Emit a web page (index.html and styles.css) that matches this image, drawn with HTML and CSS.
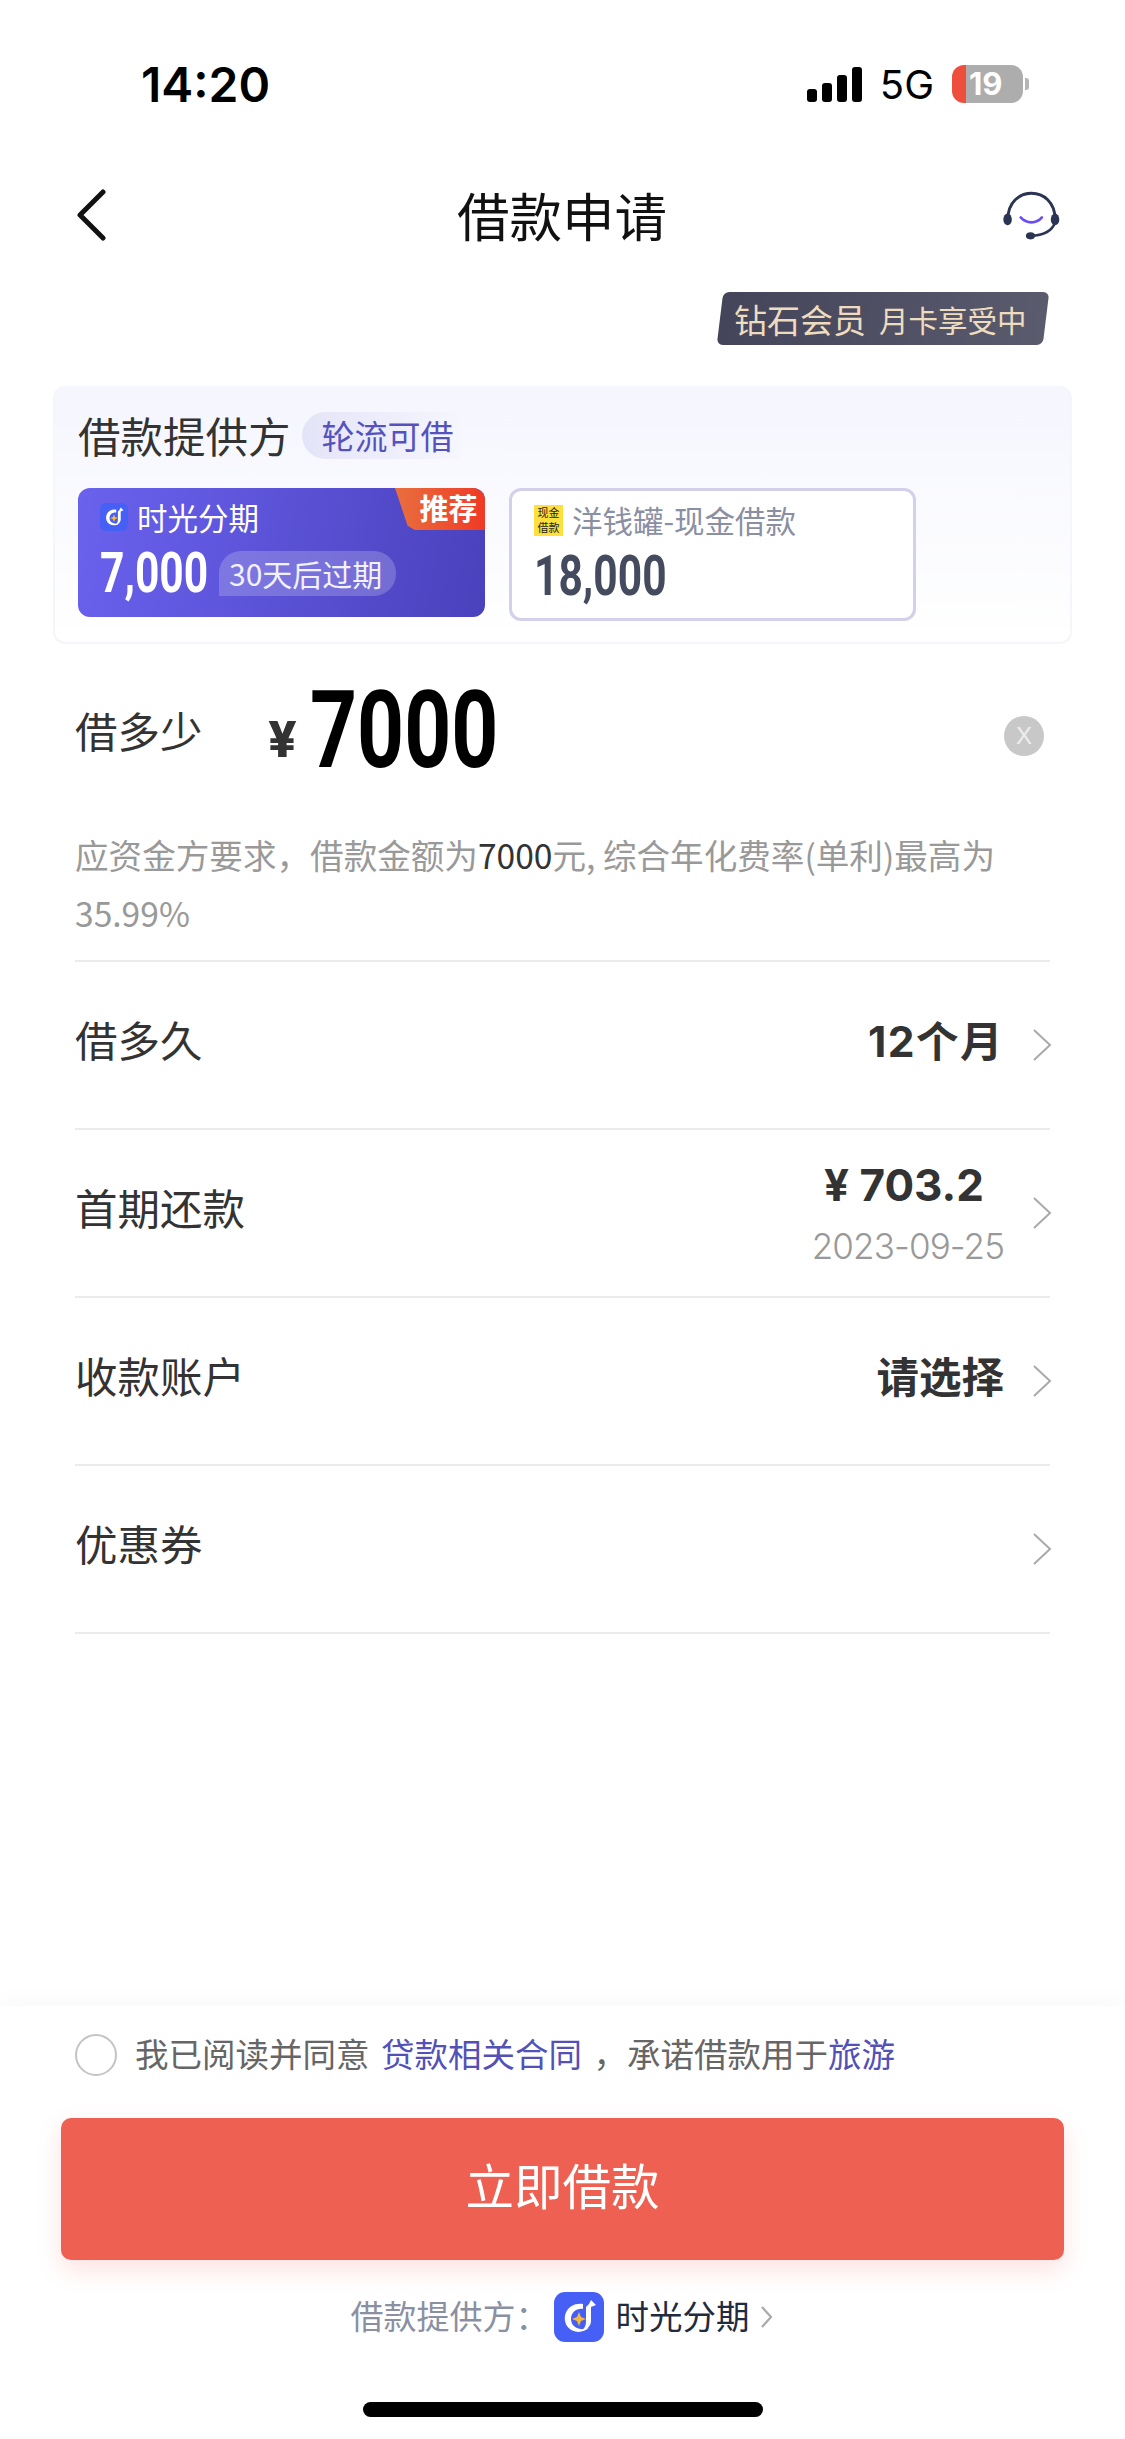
FILE: index.html
```html
<!DOCTYPE html>
<html lang="zh-CN">
<head>
    <meta charset="UTF-8">
    <meta name="viewport" content="width=device-width, initial-scale=1.0">
    <title>借款申请</title>
    <link rel="stylesheet" href="styles.css">
</head>
<body>
    <div class="page">
        <div class="status-bar">
            <span class="status-time">14:20</span>
            <div class="status-right">
                <div class="signal">
                    <i class="bar-1"></i><i class="bar-2"></i><i class="bar-3"></i><i class="bar-4"></i>
                </div>
                <span class="network">5G</span>
                <div class="battery"><span class="battery-level">19</span></div>
                <i class="battery-nub"></i>
            </div>
        </div>

        <div class="nav">
            <svg class="nav-back" width="32" height="52" viewBox="0 0 32 52">
                <polyline points="28,3 5,26 28,49" fill="none" stroke="#111" stroke-width="5" stroke-linecap="round" stroke-linejoin="round"/>
            </svg>
            <h1 class="nav-title">借款申请</h1>
            <svg class="nav-service" width="59" height="54" viewBox="660 450 180 165">
                <path d="M681 545 C681 440 825 440 825 545" fill="none" stroke="#2b3553" stroke-width="9"/>
                <path d="M825 555 C815 585 785 595 750 596" fill="none" stroke="#2b3553" stroke-width="8"/>
                <ellipse cx="680" cy="546" rx="13" ry="18" fill="#2b3553"/>
                <ellipse cx="825" cy="546" rx="13" ry="18" fill="#2b3553"/>
                <ellipse cx="750" cy="596" rx="14" ry="11" fill="#2b3553"/>
                <path d="M720 540 C738 560 768 560 785 540" fill="none" stroke="#6a4df5" stroke-width="8" stroke-linecap="round"/>
            </svg>
        </div>

        <div class="vip-row">
            <div class="vip-badge">
                <span class="vip-level">钻石会员</span>
                <span class="vip-term">月卡享受中</span>
            </div>
        </div>

        <div class="provider-card">
            <div class="provider-head">
                <span class="provider-title">借款提供方</span>
                <span class="provider-pill">轮流可借</span>
            </div>
            <div class="provider-list">
                <div class="provider-item provider-active">
                    <span class="provider-corner">推荐</span>
                    <div class="provider-name">
                        <svg class="logo" width="28" height="28" viewBox="0 0 50 50">
                            <rect width="50" height="50" rx="11" fill="#4660f5"/>
                            <path d="M29 12 C14 10 7 24 13 34 C19 42 29 41 35 36 C27 39 17 36 17 27 C17 20 23 16 29 17 Z" fill="#fff"/>
                            <path d="M32 15 L32 30 C32 34 30 37 27 39 C33 38 37 34 37 29 L37 15 L42 13 L37 8 L35 12 Z" fill="#fff"/>
                            <path d="M25 20 L27 25 L32 27 L27 29 L25 34 L23 29 L18 27 L23 25 Z" fill="#f6b93b"/>
                        </svg>
                        <span>时光分期</span>
                    </div>
                    <div class="provider-amount">
                        <span class="amount-box"><span class="amount-num">7,000</span></span>
                        <span class="amount-tag">30天后过期</span>
                    </div>
                </div>
                <div class="provider-item provider-normal">
                    <div class="provider-name">
                        <span class="logo-yellow"><b>现金</b><b>借款</b></span>
                        <span>洋钱罐-现金借款</span>
                    </div>
                    <div class="provider-amount">
                        <span class="amount-box amount-box-wide"><span class="amount-num">18,000</span></span>
                    </div>
                </div>
            </div>
        </div>

        <div class="amount-row">
            <span class="row-label amount-label">借多少</span>
            <span class="amount-yen">¥</span>
            <span class="amount-big-box"><span class="amount-big">7000</span></span>
            <span class="amount-clear">X</span>
        </div>

        <div class="amount-tip">
            <div class="tip-line">应资金方要求，借款金额为<span class="tip-dark">7000</span>元, 综合年化费率(单利)最高为</div>
            <div class="tip-line">35.99%</div>
        </div>

        <div class="form-row">
            <span class="row-label">借多久</span>
            <div class="row-value"><span class="value-strong value-term">12个月</span></div>
            <svg class="chevron" width="20" height="34" viewBox="0 0 20 34"><polyline points="2,2 18,17 2,32" fill="none" stroke="#aaa" stroke-width="2"/></svg>
        </div>
        <div class="form-row">
            <span class="row-label">首期还款</span>
            <div class="row-value">
                <span class="value-strong value-money">¥ 703.2</span>
                <span class="value-date">2023-09-25</span>
            </div>
            <svg class="chevron" width="20" height="34" viewBox="0 0 20 34"><polyline points="2,2 18,17 2,32" fill="none" stroke="#aaa" stroke-width="2"/></svg>
        </div>
        <div class="form-row">
            <span class="row-label">收款账户</span>
            <div class="row-value"><span class="value-strong">请选择</span></div>
            <svg class="chevron" width="20" height="34" viewBox="0 0 20 34"><polyline points="2,2 18,17 2,32" fill="none" stroke="#aaa" stroke-width="2"/></svg>
        </div>
        <div class="form-row">
            <span class="row-label">优惠券</span>
            <div class="row-value"></div>
            <svg class="chevron" width="20" height="34" viewBox="0 0 20 34"><polyline points="2,2 18,17 2,32" fill="none" stroke="#aaa" stroke-width="2"/></svg>
        </div>

        <div class="bottom-panel">
            <div class="agree-row">
                <i class="agree-check"></i>
                <span class="agree-text">我已阅读并同意 <a class="agree-link">贷款相关合同</a> ，承诺借款用于<a class="agree-link">旅游</a></span>
            </div>
            <button class="submit-btn">立即借款</button>
            <div class="bottom-provider">
                <span class="bottom-label">借款提供方：</span>
                <svg class="logo-big" width="50" height="50" viewBox="0 0 50 50">
                    <rect width="50" height="50" rx="11" fill="#4660f5"/>
                    <path d="M29 12 C14 10 7 24 13 34 C19 42 29 41 35 36 C27 39 17 36 17 27 C17 20 23 16 29 17 Z" fill="#fff"/>
                    <path d="M32 15 L32 30 C32 34 30 37 27 39 C33 38 37 34 37 29 L37 15 L42 13 L37 8 L35 12 Z" fill="#fff"/>
                    <path d="M25 20 L27 25 L32 27 L27 29 L25 34 L23 29 L18 27 L23 25 Z" fill="#f6b93b"/>
                </svg>
                <span class="bottom-name">时光分期</span>
                <svg width="13" height="24" viewBox="0 0 13 24"><polyline points="2,2 11,12 2,22" fill="none" stroke="#aaa" stroke-width="2.2"/></svg>
            </div>
            <div class="home-bar"></div>
        </div>
    </div>
</body>
</html>
```

FILE: styles.css
```css
* {
    box-sizing: border-box;
}
html, body {
    margin: 0;
    padding: 0;
    background-color: #fff;
}
body {
    font-family: "Noto Sans CJK SC", "Noto Sans", sans-serif;
    color: #333;
}
.page {
    display: flex;
    flex-direction: column;
    width: 1125px;
    height: 2439px;
    overflow: hidden;
}

/* status bar */
.status-bar {
    display: flex;
    justify-content: space-between;
    align-items: center;
    height: 164px;
    padding: 4px 96px 0 141px;
}
.status-time {
    font-family: Inter, sans-serif;
    font-size: 48px;
    font-weight: 600;
    color: #000;
}
.status-right {
    display: flex;
    align-items: center;
}
.signal {
    display: flex;
    align-items: flex-end;
    gap: 5px;
    height: 35px;
    margin-right: 18px;
}
.signal i {
    display: block;
    width: 10px;
    background-color: #000;
    border-radius: 3px;
}
.bar-1 { height: 13px; }
.bar-2 { height: 19px; }
.bar-3 { height: 27px; }
.bar-4 { height: 35px; }
.network {
    font-family: Inter, sans-serif;
    font-size: 40px;
    color: #000;
    margin-right: 18px;
}
.battery {
    width: 71px;
    height: 38px;
    border-radius: 12px;
    background: linear-gradient(to right, #ee4f3d 14px, #adadad 14px);
    padding-left: 14px;
}
.battery-level {
    display: block;
    font-family: Inter, sans-serif;
    font-size: 31px;
    font-weight: 700;
    line-height: 38px;
    color: #fff;
    padding-left: 3px;
}
.battery-nub {
    display: block;
    width: 4px;
    height: 12px;
    margin-left: 2px;
    background-color: #b5b5b5;
    border-radius: 0 3px 3px 0;
}

/* nav */
.nav {
    display: flex;
    align-items: center;
    justify-content: space-between;
    height: 102px;
    padding: 0 65px 0 75px;
}
.nav-back {
    margin-right: 16px;
}
.nav-title {
    margin: 0 0 3px;
    font-size: 52.5px;
    font-weight: 400;
    color: #111;
}

/* vip */
.vip-row {
    display: flex;
    justify-content: flex-end;
    margin-top: 26px;
    padding-right: 79px;
}
.vip-badge {
    display: flex;
    align-items: center;
    justify-content: center;
    gap: 13px;
    width: 326px;
    height: 53px;
    padding-right: 6px;
    border-radius: 6px;
    background: linear-gradient(to right, #44445a, #5b5b6e);
    transform: skewX(-7deg);
}
.vip-level,
.vip-term {
    color: #eedcbf;
    transform: skewX(7deg);
    white-space: nowrap;
}
.vip-level {
    font-size: 33px;
}
.vip-term {
    font-size: 29.5px;
}

/* provider card */
.provider-card {
    height: 258px;
    margin: 41px 53px 0;
    padding: 26px 23px 0;
    border: 2px solid #f5f5fc;
    border-top: none;
    border-radius: 12px;
    background: linear-gradient(to bottom, #f5f6fe, #fff);
}
.provider-head {
    display: flex;
    align-items: center;
    gap: 11px;
    height: 47px;
}
.provider-title {
    padding-bottom: 2px;
    font-size: 42.5px;
    color: #333;
}
.provider-pill {
    width: 159px;
    height: 47px;
    padding-left: 20px;
    font-size: 33px;
    line-height: 46px;
    color: #5552bd;
    border-radius: 24px 0 0 24px;
    background: linear-gradient(to right, #e4e4f8, #f6f6fe);
}
.provider-list {
    display: flex;
    align-items: flex-start;
    gap: 24px;
    margin-top: 29px;
}
.provider-item {
    position: relative;
    width: 407px;
    border-radius: 12px;
}
.provider-active {
    height: 129px;
    padding: 11px 0 0 22px;
    color: #fff;
    background: linear-gradient(100deg, #6a62ee, #4a41bd);
}
.provider-normal {
    height: 133px;
    padding: 11px 0 0 22px;
    color: #8a8fa3;
    background-color: #fff;
    border: 3px solid #d2d0ea;
}
.provider-corner {
    position: absolute;
    top: 0;
    right: 0;
    z-index: 0;
    width: 90px;
    height: 42px;
    padding-left: 17px;
    font-size: 29px;
    font-weight: 700;
    line-height: 38px;
    text-align: center;
    color: #fff;
}
.provider-corner::before {
    content: "";
    position: absolute;
    top: 0;
    right: 0;
    bottom: 0;
    left: 0;
    z-index: -1;
    border-top-right-radius: 12px;
    background: linear-gradient(to right, #e96f3f, #ef3a25);
    clip-path: polygon(0 0, 100% 0, 100% 100%, 22% 100%, 14% 90%);
}
.provider-name {
    display: flex;
    align-items: center;
    gap: 9px;
    height: 36px;
    font-size: 30.5px;
}
.logo-yellow {
    display: flex;
    flex-direction: column;
    justify-content: center;
    width: 29px;
    height: 31px;
    background-color: #fde03b;
    text-align: center;
}
.logo-yellow b {
    font-size: 11px;
    font-weight: 400;
    line-height: 15px;
    color: #222;
    white-space: nowrap;
}
.provider-amount {
    display: flex;
    align-items: center;
    gap: 11px;
    margin-top: 8px;
}
.amount-box {
    display: block;
    width: 108px;
    height: 60px;
}
.amount-box-wide {
    width: 134px;
}
.amount-num {
    display: inline-block;
    font-family: Roboto, sans-serif;
    font-size: 56px;
    font-weight: 700;
    line-height: 60px;
    transform: scaleX(0.76);
    transform-origin: left center;
    white-space: nowrap;
}
.provider-normal .amount-num {
    color: #444b5e;
}
.amount-tag {
    padding: 0 14px 0 10px;
    height: 45px;
    font-size: 30px;
    line-height: 44px;
    color: #f2f1ff;
    border-radius: 22px 22px 22px 0;
    background-color: rgba(255, 255, 255, 0.2);
    white-space: nowrap;
}

/* amount */
.amount-row {
    display: flex;
    align-items: center;
    height: 176px;
    margin: 0 75px;
}
.row-label {
    padding-bottom: 14px;
    font-size: 42.5px;
    color: #333;
}
.amount-label {
    width: 193px;
    padding-bottom: 5px;
}
.amount-yen {
    margin-top: 14px;
    font-family: Inter, sans-serif;
    font-size: 50px;
    font-weight: 800;
    color: #333;
}
.amount-big-box {
    display: block;
    width: 185px;
    height: 130px;
    margin-left: 13px;
}
.amount-big {
    display: inline-block;
    font-family: Roboto, sans-serif;
    font-size: 108px;
    font-weight: 700;
    line-height: 126px;
    color: #000;
    transform: scaleX(0.76);
    transform-origin: left center;
}
.amount-clear {
    margin: 8px 6px 0 auto;
    width: 40px;
    height: 40px;
    font-family: "Liberation Sans", sans-serif;
    font-size: 24px;
    line-height: 40px;
    text-align: center;
    color: #eee;
    background-color: #c8c8c8;
    border-radius: 50%;
}
.amount-tip {
    margin: 6px 75px 0;
    padding-bottom: 18px;
    font-size: 33.6px;
    line-height: 58px;
    color: #999;
    border-bottom: 2px solid #ebebeb;
}
.tip-line {
    white-space: nowrap;
}
.tip-dark {
    color: #333;
}

/* form rows */
.form-row {
    display: flex;
    align-items: center;
    height: 168px;
    margin: 0 75px;
    border-bottom: 2px solid #ebebeb;
}
.row-value {
    display: flex;
    flex-direction: column;
    align-items: flex-end;
    margin-left: auto;
    margin-right: 28px;
}
.value-strong {
    padding-bottom: 14px;
    font-family: Inter, "Noto Sans CJK SC", sans-serif;
    font-size: 42.5px;
    font-weight: 700;
    color: #333;
}
.value-term {
    letter-spacing: 1.5px;
}
.value-money {
    padding-bottom: 0;
    margin-right: 20px;
    font-size: 44px;
    line-height: 52px;
}
.value-date {
    margin-top: 13px;
    font-family: Inter, sans-serif;
    font-size: 35px;
    font-weight: 300;
    letter-spacing: -0.9px;
    line-height: 44px;
    color: #999;
}
.chevron {
    margin-right: -2px;
}

/* bottom */
.bottom-panel {
    margin-top: auto;
    height: 433px;
    background-color: #fff;
    box-shadow: 0 -8px 20px rgba(0, 0, 0, 0.025);
}
.agree-row {
    display: flex;
    align-items: center;
    height: 98px;
    padding-left: 75px;
}
.agree-check {
    display: block;
    width: 42px;
    height: 42px;
    margin-right: 18px;
    border: 2px solid #c4c4c4;
    border-radius: 50%;
}
.agree-text {
    padding-bottom: 5px;
    font-size: 33.5px;
    word-spacing: 4px;
    color: #666;
}
.agree-link {
    color: #5351b8;
}
.submit-btn {
    display: block;
    width: 1003px;
    height: 142px;
    margin: 14px 0 0 61px;
    padding: 0 0 10px;
    border: none;
    border-radius: 10px;
    font-family: inherit;
    font-size: 48.5px;
    color: #fff;
    background-color: #ee6051;
    box-shadow: 0 10px 25px rgba(238, 96, 81, 0.18);
}
.bottom-provider {
    display: flex;
    align-items: center;
    justify-content: center;
    height: 50px;
    margin-top: 32px;
    padding-right: 2px;
}
.bottom-label {
    padding-bottom: 5px;
    font-size: 33px;
    color: #8a90a2;
    margin-right: 5px;
}
.bottom-name {
    margin: 0 10px 0 12px;
    padding-bottom: 5px;
    font-size: 33.5px;
    color: #222a40;
}
.home-bar {
    width: 400px;
    height: 15px;
    margin: 60px auto 0;
    background-color: #000;
    border-radius: 8px;
}
```
